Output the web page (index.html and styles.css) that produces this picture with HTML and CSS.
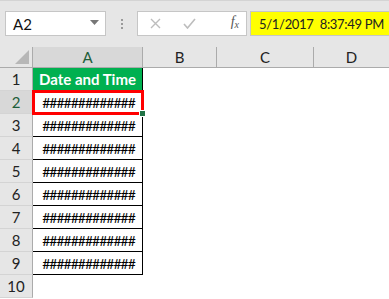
FILE: index.html
```html
<!DOCTYPE html>
<html>
<head>
<meta charset="utf-8">
<link rel="stylesheet" href="styles.css">
</head>
<body>
<div class="toolbar">
  <div class="namebox"><span>A2</span><svg class="dd" width="9" height="5" viewBox="0 0 9 5"><path d="M0 0H9L4.5 5Z" fill="#777"/></svg></div>
  <div class="dots"><i></i><i></i><i></i></div>
  <div class="fbox">
    <svg class="x" width="11" height="11" viewBox="0 0 11 11"><path d="M1 1L10 10M10 1L1 10" stroke="#bdbdbd" stroke-width="1.4"/></svg>
    <svg class="ok" width="13" height="11" viewBox="0 0 13 11"><path d="M1 6L4.5 10L12 1" stroke="#bdbdbd" stroke-width="1.6" fill="none"/></svg>
    <span class="fx">f<sub>x</sub></span>
  </div>
  <div class="formula">5/1/2017&nbsp; 8:37:49 PM</div>
</div>
<div class="sheet">
  <div class="corner"><svg width="14" height="14" viewBox="0 0 14 14"><path d="M14 0V14H0Z" fill="#b7b7b7"/></svg></div>
  <div class="ch sel">A</div><div class="ch">B</div><div class="ch">C</div><div class="ch last">D</div>

  <div class="rh">1</div><div class="cell head">Date and Time</div><div></div><div></div><div></div>
  <div class="rh selr">2</div><div class="cell data active">#############</div><div></div><div></div><div></div>
  <div class="rh">3</div><div class="cell data">#############</div><div></div><div></div><div></div>
  <div class="rh">4</div><div class="cell data">#############</div><div></div><div></div><div></div>
  <div class="rh">5</div><div class="cell data">#############</div><div></div><div></div><div></div>
  <div class="rh">6</div><div class="cell data">#############</div><div></div><div></div><div></div>
  <div class="rh">7</div><div class="cell data">#############</div><div></div><div></div><div></div>
  <div class="rh">8</div><div class="cell data">#############</div><div></div><div></div><div></div>
  <div class="rh">9</div><div class="cell data">#############</div><div></div><div></div><div></div>
  <div class="rh">10</div><div></div><div></div><div></div><div></div>
</div>
</body>
</html>
```
FILE: styles.css
```css
* { box-sizing: border-box; }
html, body { margin: 0; padding: 0; background: #fff; }
body { font-family: Lato, "Open Sans", "Liberation Sans", sans-serif; width: 389px; height: 299px; overflow: hidden; }

.toolbar {
  height: 47px;
  background: #e6e6e6;
  border-top: 1px solid #d4d4d4;
  padding-top: 10px;
  display: flex;
  align-items: flex-start;
}
.namebox {
  margin-left: 5px;
  width: 101px;
  height: 25px;
  background: #fff;
  border: 1px solid #c6c6c6;
  display: flex;
  align-items: center;
  justify-content: space-between;
  padding: 0 6px 0 7px;
  font-size: 15px;
  color: #111;
}
.namebox .dd { margin-top: -2px; }
.dots {
  width: 31px;
  height: 25px;
  display: flex;
  flex-direction: column;
  align-items: center;
  justify-content: center;
  gap: 2px;
}
.dots i { display: block; width: 2px; height: 2px; background: #9a9a9a; }
.fbox {
  width: 110px;
  height: 25px;
  background: #fff;
  border: 1px solid #c6c6c6;
  display: flex;
  align-items: center;
  padding-left: 12px;
}
.fbox .ok { margin-left: 22px; }
.fbox .fx {
  margin-left: auto;
  margin-right: 7px;
  font-family: "Liberation Serif", serif;
  font-style: italic;
  font-size: 14px;
  color: #555;
  margin-top: -4px;
}
.fbox .fx sub { font-size: 10px; vertical-align: -2px; }
.formula {
  margin-left: 3px;
  flex: 1;
  min-width: 0;
  height: 25px;
  background: #ffff00;
  border: 1px solid #c6c6c6;
  border-right: none;
  padding-left: 8px;
  font-size: 13px;
  letter-spacing: -0.3px;
  color: #222;
  display: flex;
  align-items: center;
  white-space: nowrap;
  overflow: hidden;
}

.sheet {
  display: grid;
  grid-template-columns: 33px 110px 74px 97px 75px;
  grid-template-rows: 21px repeat(10, 23px);
}
.corner {
  background: #e6e6e6;
  border-right: 1px solid #ababab;
  border-bottom: 1px solid #ababab;
  display: flex;
  align-items: flex-end;
  justify-content: flex-end;
  padding: 0 3px 3px 0;
}
.ch {
  background: #e6e6e6;
  border-right: 1px solid #ababab;
  border-bottom: 1px solid #ababab;
  display: flex;
  align-items: center;
  justify-content: center;
  font-size: 15px;
  color: #222;
}
.ch.sel { background: #d8d8d8; color: #1e5e3a; }
.ch.last { border-right: none; }
.rh {
  background: #e6e6e6;
  border-right: 1px solid #ababab;
  border-bottom: 1px solid #d4d4d4;
  display: flex;
  align-items: center;
  justify-content: center;
  font-size: 15px;
  color: #222;
}
.rh.selr { background: #d8d8d8; color: #1e5e3a; }
.cell {
  border-right: 1px solid #000;
  border-bottom: 1px solid #000;
  display: flex;
  align-items: center;
  justify-content: center;
  font-size: 15px;
  white-space: nowrap;
  overflow: hidden;
}
.cell.head {
  background: #00b050;
  color: #fff;
  font-weight: bold;
  font-size: 15px;
}
.cell.data { color: #000; font-size: 14px; letter-spacing: -1px; padding-left: 2px; }
.cell.active { position: relative; overflow: visible; }
.cell.active::after {
  content: "";
  position: absolute;
  left: -1px; top: -1px; right: -2px; bottom: -2px;
  border: 3px solid #ff0000;
}
.cell.active::before {
  content: "";
  position: absolute;
  right: -4px; bottom: -4px;
  width: 5px; height: 5px;
  background: #217346;
  border: 1px solid #fff;
  z-index: 2;
}
```
